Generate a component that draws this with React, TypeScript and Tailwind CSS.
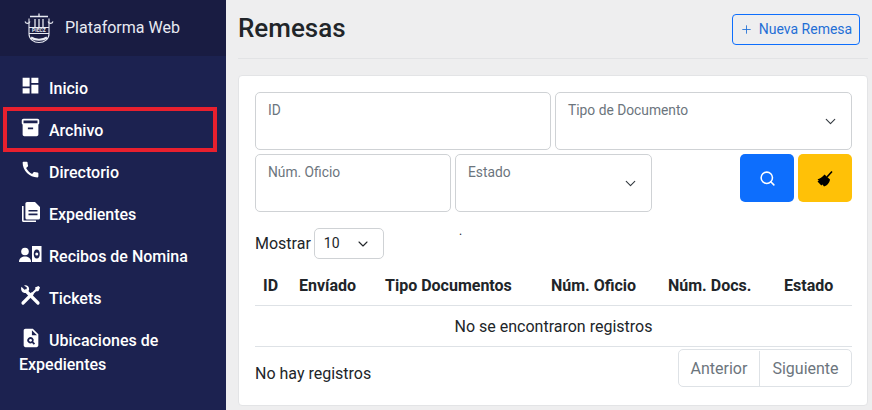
import React from "react";
import { ChevronDown, Plus, Search } from "lucide-react";
import { MdCall, MdDashboard, MdInventory2, MdPlagiarism } from "react-icons/md";

const LogoIcon = () => (
    <svg width="30" height="32" viewBox="0 0 30 32" fill="none" stroke="#e8eaf2" strokeWidth="1.1">
        <path d="M6 4.500h18M15 1.500v3M11 7v8M15 7v8M19 7v8" strokeWidth="1.300" />
        <path d="M1 9.500c1 2.500 4 2.500 5 0M24 9.500c1 2.500 4 2.500 5 0" />
        <path d="M5 6.500v15.500c0 5 4.500 8.500 10 8.500s10-3.500 10-8.500V6.500" />
        <path d="M5 15.500h20M5 21.500h20" />
        <text x="15" y="20.300" textAnchor="middle" fontSize="5" fontWeight="700" fill="#e8eaf2" stroke="none" fontFamily="Roboto, sans-serif">PIECZ</text>
        <path d="M7 25.500c4 3 12 3 16 0" strokeWidth="2.200" />
    </svg>
);

const ExpedientesIcon = () => (
    <svg width="20" height="22" viewBox="0 0 20 22" fill="white">
        <path d="M1 5h1.600v14.400H15V21H2.600A1.600 1.600 0 0 1 1 19.400z" />
        <path fillRule="evenodd" d="M6 1h8l5 5v11a1.600 1.600 0 0 1-1.600 1.600H6A1.600 1.600 0 0 1 4.400 17V2.600A1.600 1.600 0 0 1 6 1zm1.500 8v1.600h9V9zm0 3.600v1.600h9v-1.600z" />
    </svg>
);

const RecibosIcon = () => (
    <svg width="23" height="18" viewBox="0 0 23 18" fill="white">
        <circle cx="6" cy="6.500" r="3.800" />
        <path d="M0 17c0-4 3-5.500 6-5.500s6 1.500 6 5.500z" />
        <path fillRule="evenodd" d="M13 1h9.500v16H13zm4.750 3.500c-2 0-3 2-3 4.500s1 4.500 3 4.500 3-2 3-4.500-1-4.500-3-4.500z" />
        <circle cx="17.750" cy="9" r="1.500" />
    </svg>
);

const TicketsIcon = () => (
    <svg width="21" height="21" viewBox="0 0 21 21" fill="none" stroke="white">
        <path d="M3 18l9-9" strokeWidth="3.200" strokeLinecap="round" />
        <path d="M12 9l5-5" strokeWidth="2" />
        <path d="M15 2.500l3.500-1.500 1.500 1.500-1.500 3.500-2 .5z" fill="white" strokeWidth="0" />
        <path d="M6 6l12 12" strokeWidth="3.200" strokeLinecap="round" />
        <path d="M1.500 1.800l3 3 2-.4.4-2-2.800-2c2.800-.8 5.400 1.200 5 4.200-.3 2.400-2.800 4-5.200 3.200C1.500 7 .4 4.200 1.500 1.800z" fill="white" strokeWidth="0" />
    </svg>
);

const BroomIcon = () => (
    <svg width="17" height="17" viewBox="0 0 17 17" fill="black">
        <path d="M10 7l5-5.500" stroke="black" strokeWidth="1.600" fill="none" />
        <path d="M7.500 4.500l5.500 5c-.3 3-2.700 6-6 7l-1.500-2-1.200 1L.5 11.500l1.300-1-1.300-1.300c2-.3 5-2 7-4.700z" />
    </svg>
);

const menu = [
    { label: "Inicio", icon: <MdDashboard size={21} /> },
    { label: "Archivo", icon: <MdInventory2 size={21} />, marked: true },
    { label: "Directorio", icon: <MdCall size={21} /> },
    { label: "Expedientes", icon: <ExpedientesIcon /> },
    { label: "Recibos de Nomina", icon: <RecibosIcon /> },
    { label: "Tickets", icon: <TicketsIcon /> },
    { label: "Ubicaciones de Expedientes", icon: <MdPlagiarism size={22} /> },
];

const Field = ({ label, select }: { label: string; select?: boolean }) => (
    <div className="relative h-[58px] rounded-[5px] border border-[#cfd2d5] bg-white pl-3 pt-[7px] text-[13.8px] leading-[20px] text-[#6c757d]">
        {label}
        {select && <ChevronDown size={17} strokeWidth={1.6} className="absolute right-[12px] top-[20px] text-[#343a40]" />}
    </div>
);

const columns = [
    { label: "ID", w: "w-[36px]" },
    { label: "Envíado", w: "w-[86px]" },
    { label: "Tipo Documentos", w: "w-[166px]" },
    { label: "Núm. Oficio", w: "w-[117px]" },
    { label: "Núm. Docs.", w: "w-[116px]" },
    { label: "Estado", w: "flex-1" },
];

const App = () => {
    return (
        <div className="flex h-[410px] w-[872px] overflow-hidden bg-[#eeeeef] font-['Roboto',sans-serif] text-[#212529]">
            <aside className="w-[226px] shrink-0 bg-[#1c2250] text-white">
                <div className="flex h-[56px] items-center gap-[11px] bg-[#191c42] pl-[24px] text-[16px] text-[#e8eaf2]">
                    <LogoIcon />
                    <span>Plataforma Web</span>
                </div>
                <nav className="pt-[12px]">
                    {menu.map((item) => (
                        <div key={item.label} className="relative px-[19px] py-[9px] text-[16px] font-medium leading-[24px]">
                            <span className="mr-[7px] inline-flex h-[21px] w-[23px] -translate-y-[4px] items-center justify-center align-middle">
                                {item.icon}
                            </span>
                            {item.label}
                            {item.marked && (
                                <div className="absolute left-[3px] top-[-3px] h-[45px] w-[214px] border-[4px] border-[#e8202e]" />
                            )}
                        </div>
                    ))}
                </nav>
            </aside>
            <main className="min-w-0 flex-1 pl-[12px] pr-[4px]">
                <header className="flex h-[59px] items-start justify-between border-b border-[#e2e3e5] pt-[14px] pr-[8px]">
                    <h1 className="text-[26px] font-medium leading-[28px]">Remesas</h1>
                    <button className="flex h-[31px] w-[128px] items-center justify-center gap-[6px] rounded-[4px] border border-[#0d6efd] text-[14px] text-[#1f6fd6]">
                        <Plus size={13} strokeWidth={1.6} />
                        Nueva Remesa
                    </button>
                </header>
                <section className="mt-[16px] h-[331px] rounded-[4px] border border-[#e3e4e6] bg-white pl-[16px] pr-[15px] pt-[16px]">
                    <div className="grid grid-cols-[296px_297px] gap-[4px]">
                        <Field label="ID" />
                        <Field label="Tipo de Documento" select />
                    </div>
                    <div className="mt-[4px] flex gap-[4px]">
                        <div className="w-[196px]"><Field label="Núm. Oficio" /></div>
                        <div className="w-[197px]"><Field label="Estado" select /></div>
                        <div className="ml-auto flex gap-[4px]">
                            <button className="flex h-[48px] w-[54px] items-center justify-center rounded-[5px] bg-[#0d6efd] text-white">
                                <Search size={17} strokeWidth={2.2} />
                            </button>
                            <button className="flex h-[48px] w-[54px] items-center justify-center rounded-[5px] bg-[#ffc107] text-black">
                                <BroomIcon />
                            </button>
                        </div>
                    </div>
                    <div className="relative mt-[16px] flex items-center gap-[3px] text-[16px]">
                        Mostrar
                        <div className="flex h-[31px] w-[70px] items-center justify-between rounded-[5px] border border-[#cfd2d5] pl-[9px] pr-[12px] text-[14px]">
                            10
                            <ChevronDown size={16} strokeWidth={1.6} />
                        </div>
                        <span className="absolute left-[204px] top-[-3px] text-[12px] leading-[12px]">.</span>
                    </div>
                    <div className="mt-[10px] flex h-[37px] items-center border-b border-[#dee2e6] pb-[2px] pl-[8px] text-[16px] font-bold">
                        {columns.map((col) => (
                            <div key={col.label} className={col.w}>{col.label}</div>
                        ))}
                    </div>
                    <div className="flex h-[41px] items-center justify-center border-b border-[#dee2e6] pt-[2px] text-[16px]">
                        No se encontraron registros
                    </div>
                    <div className="mt-[2px] flex items-center justify-between text-[16px]">
                        <span className="mt-[12px]">No hay registros</span>
                        <div className="flex h-[38px] rounded-[5px] border border-[#dee2e6] pt-[1px] text-[#6c757d]">
                            <span className="flex w-[81px] items-center justify-center border-r border-[#dee2e6]">Anterior</span>
                            <span className="flex w-[91px] items-center justify-center">Siguiente</span>
                        </div>
                    </div>
                </section>
            </main>
        </div>
    );
};

export default App;
